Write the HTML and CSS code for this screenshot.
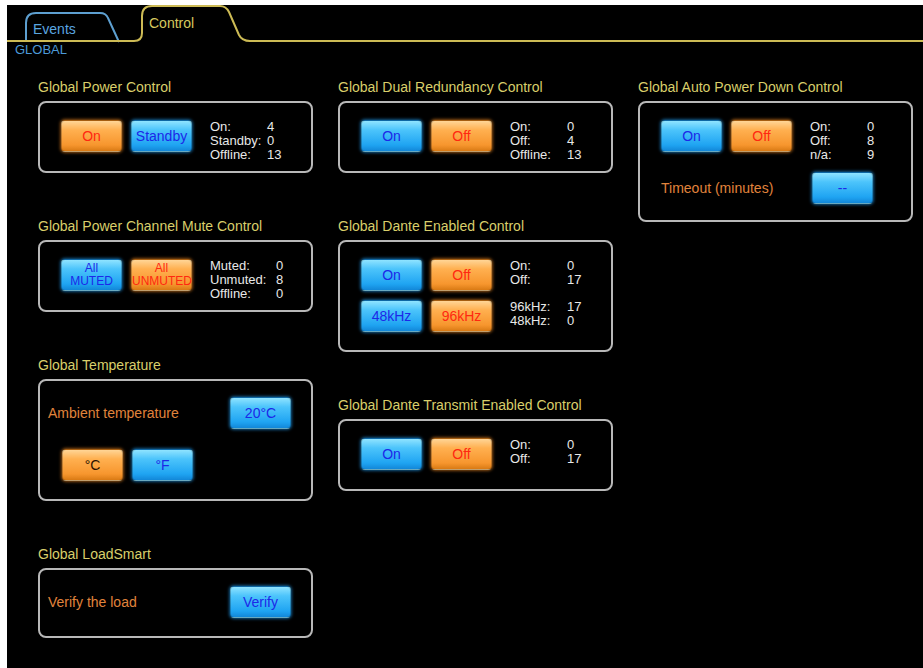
FILE: index.html
```html
<!DOCTYPE html>
<html lang="en">
<head>
<meta charset="utf-8"/>
<meta content="width=device-width, initial-scale=1.0" name="viewport"/>
<title>Control – Global</title>
<link rel="stylesheet" href="styles.css">
</head>
<body>
<div class="app">
  <div class="tabbar">
    <svg class="tabs" width="916" height="38" viewBox="0 0 916 38">
      <path d="M19 37 V18 Q19 8 29 8 H93 Q99 8 101 13 L112 37" fill="none" stroke="#5d9fd0" stroke-width="2"/>
      <path d="M0 36 H127 Q135 36 135 28 V11 Q135 1 145 1 H213 Q219 1 222 7 L232 30 Q235 36 243 36 H916" fill="none" stroke="#cdbb55" stroke-width="2"/>
    </svg>
    <span class="tab tab-events">Events</span>
    <span class="tab tab-control">Control</span>
  </div>
  <div class="section-label">GLOBAL</div>

  <main class="columns">
    <div class="col">
      <section class="group">
        <h2>Global Power Control</h2>
        <div class="box h72">
          <div class="row">
            <button class="btn orange">On</button>
            <button class="btn blue">Standby</button>
            <div class="stats">
              <span>On:</span><span>4</span>
              <span>Standby:</span><span>0</span>
              <span>Offline:</span><span>13</span>
            </div>
          </div>
        </div>
      </section>
      <section class="group">
        <h2>Global Power Channel Mute Control</h2>
        <div class="box h72">
          <div class="row">
            <button class="btn blue two">All<br>MUTED</button>
            <button class="btn orange two">All<br>UNMUTED</button>
            <div class="stats wide">
              <span>Muted:</span><span>0</span>
              <span>Unmuted:</span><span>8</span>
              <span>Offline:</span><span>0</span>
            </div>
          </div>
        </div>
      </section>
      <section class="group">
        <h2>Global Temperature</h2>
        <div class="box h122 loose">
          <div class="row spread">
            <span class="label">Ambient temperature</span>
            <button class="btn blue">20°C</button>
          </div>
          <div class="row indent">
            <button class="btn orange dark">°C</button>
            <button class="btn blue">°F</button>
          </div>
        </div>
      </section>
      <section class="group">
        <h2>Global LoadSmart</h2>
        <div class="box h70 loose">
          <div class="row spread">
            <span class="label">Verify the load</span>
            <button class="btn blue">Verify</button>
          </div>
        </div>
      </section>
    </div>

    <div class="col">
      <section class="group">
        <h2>Global Dual Redundancy Control</h2>
        <div class="box h72">
          <div class="row">
            <button class="btn blue">On</button>
            <button class="btn orange">Off</button>
            <div class="stats">
              <span>On:</span><span>0</span>
              <span>Off:</span><span>4</span>
              <span>Offline:</span><span>13</span>
            </div>
          </div>
        </div>
      </section>
      <section class="group">
        <h2>Global Dante Enabled Control</h2>
        <div class="box h112">
          <div class="row">
            <button class="btn blue">On</button>
            <button class="btn orange">Off</button>
            <div class="stats">
              <span>On:</span><span>0</span>
              <span>Off:</span><span>17</span>
            </div>
          </div>
          <div class="row next">
            <button class="btn blue">48kHz</button>
            <button class="btn orange">96kHz</button>
            <div class="stats">
              <span>96kHz:</span><span>17</span>
              <span>48kHz:</span><span>0</span>
            </div>
          </div>
        </div>
      </section>
      <section class="group">
        <h2>Global Dante Transmit Enabled Control</h2>
        <div class="box h72">
          <div class="row">
            <button class="btn blue">On</button>
            <button class="btn orange">Off</button>
            <div class="stats">
              <span>On:</span><span>0</span>
              <span>Off:</span><span>17</span>
            </div>
          </div>
        </div>
      </section>
    </div>

    <div class="col">
      <section class="group">
        <h2>Global Auto Power Down Control</h2>
        <div class="box h121">
          <div class="row">
            <button class="btn blue">On</button>
            <button class="btn orange">Off</button>
            <div class="stats">
              <span>On:</span><span>0</span>
              <span>Off:</span><span>8</span>
              <span>n/a:</span><span>9</span>
            </div>
          </div>
          <div class="row timeout">
            <span class="label">Timeout (minutes)</span>
            <button class="btn blue">--</button>
          </div>
        </div>
      </section>
    </div>
  </main>
</div>
</body>
</html>
```

FILE: styles.css
```css
body {
  margin: 5px 0 0 7px;
  background: #fff;
  font-family: 'Liberation Sans', Arial, sans-serif;
}
.app {
  background: #000;
  min-height: 663px;
}
.tabbar {
  position: relative;
  height: 38px;
}
.tabs {
  display: block;
}
.tab {
  position: absolute;
  font-size: 14px;
  line-height: 14px;
}
.tab-events {
  left: 26px;
  top: 17px;
  color: #5aa6e0;
}
.tab-control {
  left: 142px;
  top: 11px;
  color: #d6c85e;
}
.section-label {
  padding-left: 8px;
  font-size: 13px;
  line-height: 14px;
  color: #4c9ad8;
}
.columns {
  display: flex;
  gap: 25px;
  padding: 23px 0 0 31px;
}
.col {
  width: 275px;
}
.group {
  margin-bottom: 46px;
}
.group h2 {
  margin: 0 0 7px;
  font-size: 14px;
  font-weight: normal;
  line-height: 14px;
  color: #d9cf6b;
}
.box {
  box-sizing: border-box;
  border: 2px solid #b8b8b8;
  border-radius: 8px;
  padding: 17px 0 0 21px;
}
.h70 { height: 70px; }
.h72 { height: 72px; }
.h112 { height: 112px; }
.h121 { height: 121px; }
.h122 { height: 122px; }
.box.loose {
  padding: 16px 20px 0 8px;
}
.row {
  display: flex;
  align-items: flex-start;
}
.row.next {
  margin-top: 9px;
}
.row.spread {
  justify-content: space-between;
  align-items: center;
}
.row.indent {
  margin-top: 20px;
  padding-left: 14px;
}
.row.timeout {
  margin-top: 10px;
  align-items: center;
}
.timeout .label {
  width: 151px;
}
.label {
  font-size: 14px;
  color: #e0843c;
}
.btn {
  width: 61px;
  height: 32px;
  margin-right: 9px;
  padding: 0;
  border: 1px solid rgba(0,0,0,0.25);
  border-radius: 4px;
  font-family: inherit;
  font-size: 14px;
  cursor: pointer;
}
.row.spread .btn,
.timeout .btn {
  margin-right: 0;
}
.btn.blue {
  background: linear-gradient(#8fe3ff 0%, #4cc4fb 30%, #1fa4f2 80%, #1287d8 100%);
  box-shadow: 0 0 3px 1px rgba(30,150,230,0.6);
  color: #1c28e8;
}
.btn.orange {
  background: linear-gradient(#ffd596 0%, #ffb050 30%, #f7962e 80%, #d97a14 100%);
  box-shadow: 0 0 3px 1px rgba(230,130,30,0.6);
  color: #ff2810;
}
.btn.orange.dark {
  color: #2a1200;
}
.btn.two {
  font-size: 12px;
  line-height: 13px;
}
.stats {
  display: grid;
  grid-template-columns: 57px auto;
  margin-left: 9px;
  font-size: 13px;
  line-height: 14px;
  color: #e8e8e8;
}
.stats.wide {
  grid-template-columns: 66px auto;
}
```
